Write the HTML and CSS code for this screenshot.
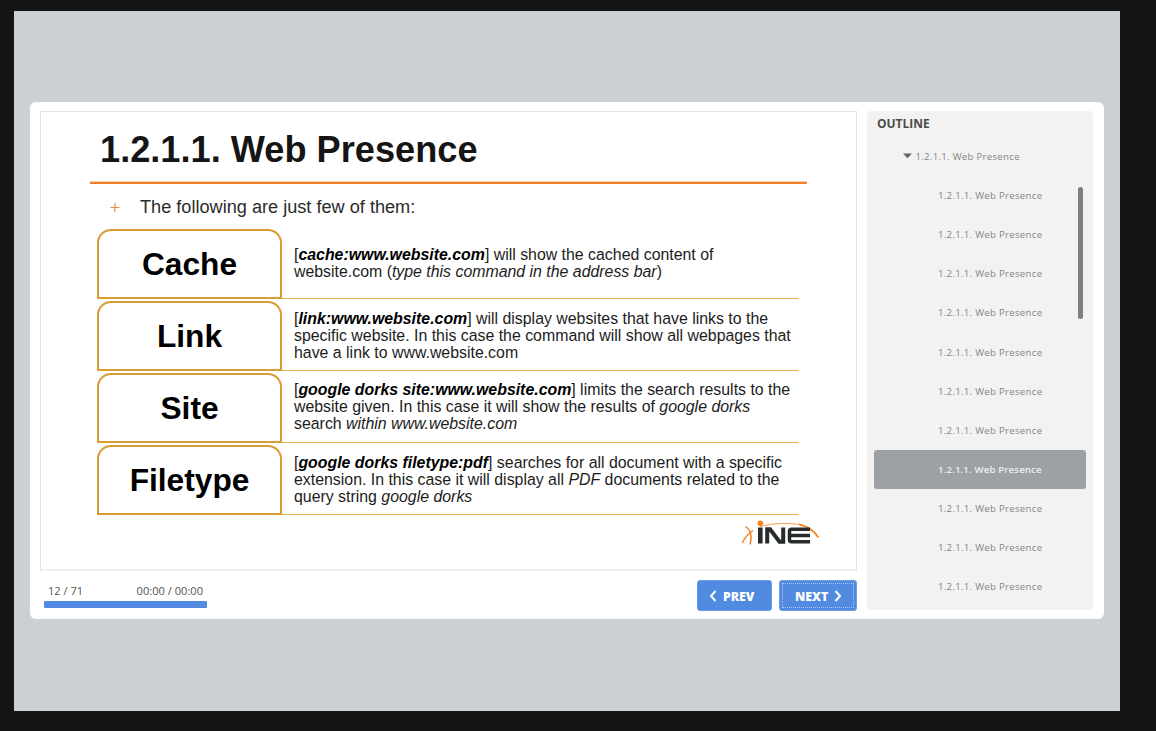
FILE: index.html
```html
<!DOCTYPE html>
<html lang="en">
<head>
<meta charset="utf-8">
<title>1.2.1.1. Web Presence</title>
<link rel="stylesheet" href="styles.css">
</head>
<body>
<div class="stage">
  <div class="player">
    <main class="main">
      <section class="slide">
        <h1 class="title">1.2.1.1. Web Presence</h1>
        <p class="intro"><svg class="plus" width="10" height="10" viewBox="0 0 10 10"><path d="M.4 5.500H9.4M5.2 1L4.7 9.8" stroke="#f0893f" stroke-width="1.200" fill="none"/></svg><span>The following are just few of them:</span></p>
        <div class="rows">
          <div class="row"><div class="term">Cache</div><div class="desc desc-short">[<b>cache:www.website.com</b>] will show the cached content of<br>website.com (<i>type this command in the address bar</i>)</div></div>
          <div class="row"><div class="term">Link</div><div class="desc">[<b>link:www.website.com</b>] will display websites that have links to the<br>specific website. In this case the command will show all webpages that<br>have a link to www.website.com</div></div>
          <div class="row"><div class="term">Site</div><div class="desc desc-high">[<b>google dorks site:www.website.com</b>] limits the search results to the<br>website given. In this case it will show the results of <i>google dorks</i><br>search <i>within www.website.com</i></div></div>
          <div class="row"><div class="term">Filetype</div><div class="desc">[<b>google dorks filetype:pdf</b>] searches for all document with a specific<br>extension. In this case it will display all <i>PDF</i> documents related to the<br>query string <i>google dorks</i></div></div>
        </div>
        <svg class="logo" width="80" height="28" viewBox="0 0 80 28">
          <g fill="none" stroke="#f58220">
            <path d="M19 8.500Q40 3 62 7" stroke-width=".8"/>
            <path d="M1.300 25Q4.500 17.500 12 12.500" stroke-width="1.500"/>
            <path d="M4.500 8.500Q12.500 13.500 9 26.500" stroke-width="1.400"/>
            <path d="M58 6.300Q71 9 77.500 19.500" stroke-width="1.700"/>
          </g>
          <circle cx="19.300" cy="5.300" r="2.800" fill="#f58220"/>
          <g fill="none" stroke="#272b2c" stroke-width="4.600">
            <path d="M19.300 9.500V25.500"/>
            <path d="M26.200 25.500V11.300H29L38.500 23.700H42.200V9.500" stroke-width="4"/>
            <path d="M69 11.300H50.500Q48.500 11.300 48.500 13.300V21.700Q48.500 23.700 50.500 23.700H69M48.500 17.500H69" stroke-width="3.500"/>
          </g>
        </svg>
      </section>
      <footer class="controls">
        <div class="progress">
          <div class="times"><span>12 / 71</span><span>00:00 / 00:00</span></div>
          <div class="bar"></div>
        </div>
        <div class="buttons">
          <button class="btn"><svg width="8" height="12" viewBox="0 0 8 12"><path d="M6.500 1L2 6L6.500 11" fill="none" stroke="#fff" stroke-width="2"/></svg><span>PREV</span></button>
          <button class="btn btn-next"><span>NEXT</span><svg width="8" height="12" viewBox="0 0 8 12"><path d="M1.500 1L6 6L1.500 11" fill="none" stroke="#fff" stroke-width="2"/></svg></button>
        </div>
      </footer>
    </main>
    <aside class="outline">
      <h2 class="outline-title">OUTLINE</h2>
      <ul class="list">
        <li class="item parent"><svg width="9" height="6" viewBox="0 0 9 6"><path d="M0 .500H9L4.500 5.300Z" fill="#666"/></svg>1.2.1.1. Web Presence</li>
        <li class="item">1.2.1.1. Web Presence</li>
        <li class="item">1.2.1.1. Web Presence</li>
        <li class="item">1.2.1.1. Web Presence</li>
        <li class="item">1.2.1.1. Web Presence</li>
        <li class="item">1.2.1.1. Web Presence</li>
        <li class="item">1.2.1.1. Web Presence</li>
        <li class="item">1.2.1.1. Web Presence</li>
        <li class="item selected">1.2.1.1. Web Presence</li>
        <li class="item">1.2.1.1. Web Presence</li>
        <li class="item">1.2.1.1. Web Presence</li>
        <li class="item">1.2.1.1. Web Presence</li>
      </ul>
      <div class="thumb"></div>
    </aside>
  </div>
</div>
</body>
</html>
```
FILE: styles.css
```css
* { box-sizing: border-box; }
body {
  margin: 0;
  height: 731px;
  padding: 11px 36px 20px 14px;
  background: #151515;
  overflow: hidden;
}
.stage {
  height: 700px;
  padding: 91px 16px 0;
  background: #ccd0d3;
}
.player {
  display: flex;
  gap: 10px;
  height: 517px;
  padding: 9px 11px 9px 10px;
  background: #fff;
  border-radius: 6px;
}
.main { width: 817px; }
.slide {
  position: relative;
  height: 460px;
  padding: 0 49px;
  border: 1px solid #e2e2e2;
  border-bottom: 2px solid #f0f0f0;
  font-family: "Liberation Sans", Arial, sans-serif;
}
.title {
  height: 72px;
  margin: 0;
  padding: 17px 0 0 10px;
  border-bottom: 2px solid #f2802a;
  box-shadow: inset 0 -1px #fbd0ae;
  font-size: 36.2px;
  line-height: 42px;
  color: #151515;
}
.intro {
  display: flex;
  align-items: center;
  gap: 20px;
  height: 45px;
  margin: 0;
  padding: 1px 0 0 20px;
  font-size: 18.15px;
  color: #2b2b2b;
}
.rows { padding: 0 8px 0 7px; }
.row {
  display: flex;
  height: 72px;
}
.term {
  display: flex;
  align-items: center;
  justify-content: center;
  flex: none;
  width: 185px;
  height: 70px;
  border: 2px solid #d99c33;
  border-radius: 14px 14px 0 0;
  font-size: 31.7px;
  font-weight: bold;
  color: #000;
}
.desc {
  flex: 1;
  height: 70px;
  padding: 9px 0 0 12px;
  border-bottom: 1px solid #e2b25e;
  font-size: 15.88px;
  line-height: 17px;
  white-space: nowrap;
  color: #1c1c1c;
}
.desc b { font-style: italic; color: #000; }
.desc-short { padding-top: 17px; }
.desc-high { padding-top: 8px; }
.logo {
  position: absolute;
  right: 35px;
  bottom: 23px;
}
.controls {
  display: flex;
  justify-content: space-between;
  padding: 9px 0 0 4px;
  font-family: "Open Sans", sans-serif;
}
.progress { width: 163px; }
.times {
  display: flex;
  justify-content: space-between;
  height: 21px;
  padding: 2px 4px 0;
  font-size: 11.1px;
  line-height: 17px;
  color: #555;
}
.bar {
  height: 7px;
  background: #518ae1;
  border-radius: 1px;
}
.buttons { display: flex; gap: 7px; }
.btn {
  display: flex;
  align-items: center;
  gap: 6px;
  width: 75px;
  height: 31px;
  padding: 0 0 0 11px;
  border: 1px solid #6c9de8;
  border-radius: 3px;
  background: #518ae1;
  font: 800 12.3px "Open Sans", sans-serif;
  color: #fff;
}
.btn span { padding-top: 2px; }
.btn-next {
  width: 78px;
  padding-left: 15px;
  outline: 1px dotted #a9c8f5;
  outline-offset: -4px;
}
.outline {
  position: relative;
  width: 226px;
  height: 499px;
  background: #f2f2f2;
  border-radius: 3px;
  font-family: "Open Sans", sans-serif;
}
.outline-title {
  height: 26px;
  margin: 0;
  padding: 4px 0 0 10px;
  font-size: 12px;
  line-height: 17px;
  color: #4b4b4b;
}
.list {
  margin: 0;
  padding: 0 7px;
  list-style: none;
}
.item {
  display: flex;
  align-items: center;
  height: 39.15px;
  padding: 0 0 .4px 64px;
  border-radius: 3px;
  font-size: 9.6px;
  letter-spacing: .3px;
  color: #858585;
}
.parent { gap: 3.5px; padding-left: 29px; }
.selected { background: #9ca1a5; color: #eee; font-weight: 600; letter-spacing: .17px; }
.thumb {
  position: absolute;
  top: 76px;
  right: 10px;
  width: 5px;
  height: 132px;
  border-radius: 2.5px;
  background: #7e7e7e;
}
```
